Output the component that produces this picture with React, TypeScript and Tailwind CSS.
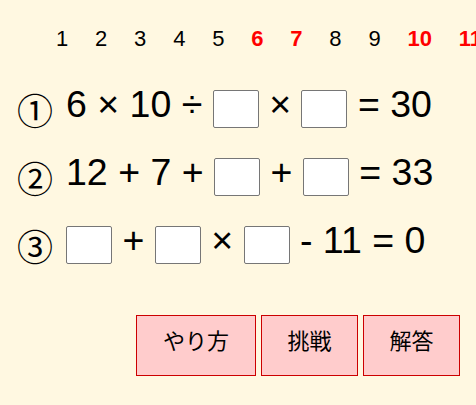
import React from 'react'

const numbers = [1, 2, 3, 4, 5, 6, 7, 8, 9, 10, 11]
const redNumbers = [6, 7, 10, 11]

function Box() {
  return (
    <input
      type="text"
      className="mt-[7px] h-[38px] w-[46px] shrink-0 rounded-[2px] border border-[#767676] bg-white"
    />
  )
}

function T({ children }: { children: React.ReactNode }) {
  return <span className="shrink-0 whitespace-pre text-[37.5px] leading-[42px]">{children}</span>
}

function Row({ mark, children }: { mark: string; children: React.ReactNode }) {
  return (
    <div className="flex items-start">
      <span className="mt-[10px] w-[49px] shrink-0 font-['Noto_Sans_CJK_JP',sans-serif] text-[36px] leading-[32px]">
        {mark}
      </span>
      {children}
    </div>
  )
}

export default function App() {
  return (
    <div className="min-h-screen w-full overflow-hidden bg-[#fff8e1] font-['Liberation_Sans',Arial,sans-serif] text-black">
      {/* number strip */}
      <div className="flex gap-[26.8px] whitespace-nowrap pl-[56px] pt-[27px] text-[22px] leading-[24px]">
        {numbers.map((n) => (
          <span
            key={n}
            className={redNumbers.includes(n) ? 'shrink-0 font-bold text-[#ff0000]' : 'shrink-0'}
          >
            {n}
          </span>
        ))}
      </div>

      {/* questions */}
      <div className="mt-[32px] flex flex-col gap-[23px] pl-[17px]">
        <Row mark="①">
          <T>6 × 10 ÷ </T>
          <Box />
          <T> × </T>
          <Box />
          <T> = 30</T>
        </Row>
        <Row mark="②">
          <T>12 + 7 + </T>
          <Box />
          <T> + </T>
          <Box />
          <T> = 33</T>
        </Row>
        <Row mark="③">
          <Box />
          <T> + </T>
          <Box />
          <T> × </T>
          <Box />
          <T> - 11 = 0</T>
        </Row>
      </div>

      {/* buttons */}
      <div className="mt-[51px] flex justify-end gap-[5px] pr-[16px] font-['Noto_Sans_CJK_JP',sans-serif] text-[22px]">
        <button className="flex h-[61px] w-[120px] items-center justify-center border border-[#cc0000] bg-[#ffcccc] pb-[12px]">
          やり方
        </button>
        <button className="flex h-[61px] w-[97px] items-center justify-center border border-[#cc0000] bg-[#ffcccc] pb-[12px]">
          挑戦
        </button>
        <button className="flex h-[61px] w-[97px] items-center justify-center border border-[#cc0000] bg-[#ffcccc] pb-[12px]">
          解答
        </button>
      </div>
    </div>
  )
}
